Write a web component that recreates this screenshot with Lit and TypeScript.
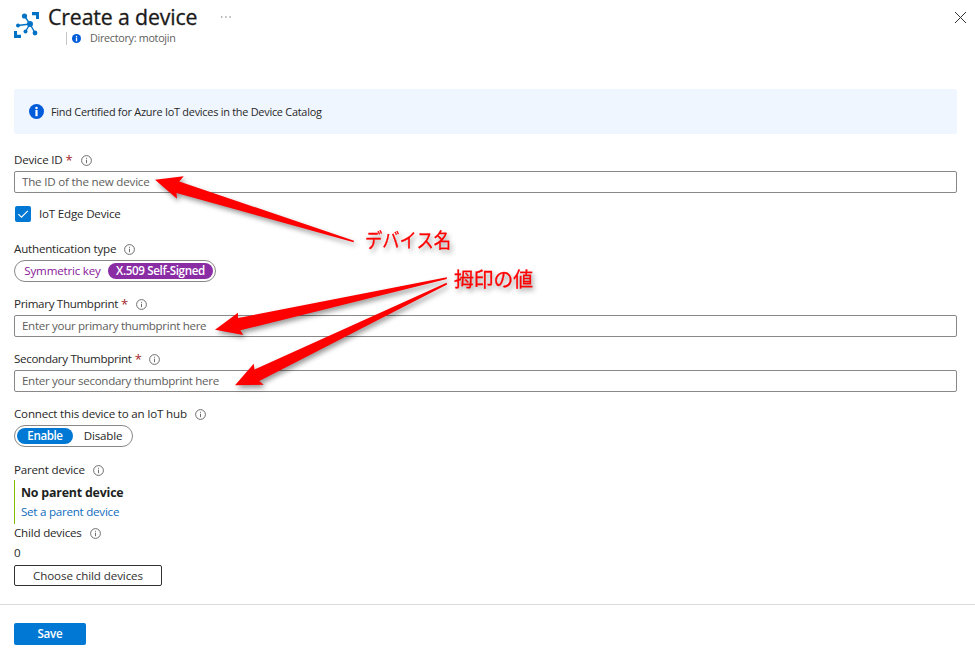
import { LitElement, html, css, svg } from "lit";
import { customElement, property } from "lit/decorators.js";


interface Arrow {
  points: string;
}


// Small outlined "i" shown after the field labels
@customElement("info-hint")
export class InfoHintElement extends LitElement {
  static styles = css`
    :host {
      display: block;
      width: 11px;
      height: 11px;
    }
    svg {
      display: block;
    }
  `;

  render() {
    return html`
      <svg width="11" height="11" viewBox="0 0 11 11">
        <circle cx="5.5" cy="5.5" r="4.9" fill="none" stroke="#605e5c" stroke-width="0.9" />
        <path d="M5.5 4.7V8.2M5.5 2.8V3.8" stroke="#605e5c" stroke-width="0.9" />
      </svg>
    `;
  }
}


// Filled blue "i" used by the header and the banner
@customElement("info-badge")
export class InfoBadgeElement extends LitElement {
  static styles = css`
    :host {
      display: block;
    }
    svg {
      display: block;
      width: 100%;
      height: 100%;
    }
  `;

  render() {
    return html`
      <svg viewBox="0 0 15 15">
        <circle cx="7.5" cy="7.5" r="7.5" fill="#015cda" />
        <circle cx="7.5" cy="4" r="1.25" fill="#fff" />
        <rect x="6.4" y="6" width="2.2" height="6.2" fill="#fff" />
      </svg>
    `;
  }
}


@customElement("field-label")
export class FieldLabelElement extends LitElement {
  static styles = css`
    :host {
      display: flex;
      align-items: center;
      height: 16px;
      white-space: nowrap;
    }
    .required {
      color: #a4262c;
      margin-left: 3px;
      font-size: 13px;
    }
    info-hint {
      margin-left: 8px;
    }
  `;

  @property({ type: String })
  text = "";

  @property({ type: Boolean })
  required = false;

  render() {
    return html`
      <span>${this.text}</span>
      ${this.required ? html`<span class="required">*</span>` : ""}
      <info-hint></info-hint>
    `;
  }
}


@customElement("app-root")
export class AppRootElement extends LitElement {
  static styles = [
    css`
      :host {
        display: block;
        position: relative;
        width: 975px;
        height: 656px;
        overflow: hidden;
        background: #fff;
        color: #292827;
        font-family: "Open Sans", "Noto Sans", sans-serif;
        font-size: 11.6px;
        letter-spacing: -0.2px;
        line-height: 16px;
      }
      * {
        box-sizing: border-box;
      }
      header {
        display: flex;
        height: 89px;
        padding: 0 9px 0 14px;
      }
      .logo {
        margin-top: 12px;
        width: 26px;
        height: 26px;
      }
      .heading {
        flex: 1;
        margin-left: 8px;
      }
      .title-row {
        display: flex;
        align-items: center;
        height: 32px;
        padding-top: 1px;
      }
      h1 {
        margin: 0;
        font-size: 21.3px;
        font-weight: 400;
        letter-spacing: -0.15px;
        line-height: 32px;
        color: #1b1a19;
        -webkit-text-stroke: 0.3px #1b1a19;
      }
      .more {
        margin-left: 23px;
      }
      .directory {
        display: flex;
        align-items: center;
        height: 13px;
        margin-left: 18px;
        padding-left: 5px;
        border-left: 1px solid #c8c6c4;
        color: #605e5c;
        font-size: 10.8px;
        letter-spacing: -0.3px;
        line-height: 12px;
      }
      .directory span {
        margin-top: -1px;
      }
      .directory info-badge {
        width: 9px;
        height: 9px;
        margin-right: 9px;
      }
      .close {
        margin-top: 12px;
        width: 11px;
        height: 11px;
      }
      main {
        padding: 0 18px 0 14px;
        height: 515px;
      }
      .banner {
        display: flex;
        align-items: center;
        height: 45px;
        padding-left: 15px;
        border-radius: 2px;
        background: #eff6ff;
        font-size: 10.9px;
        letter-spacing: -0.25px;
      }
      .banner info-badge {
        width: 15px;
        height: 15px;
        margin-right: 7px;
      }
      .field {
        padding-top: 18px;
      }
      .auth-type {
        padding-top: 19px;
      }
      .primary,
      .secondary {
        padding-top: 14px;
        letter-spacing: -0.32px;
      }
      .connect {
        padding-top: 14px;
      }
      .parent {
        padding-top: 15px;
      }
      input {
        display: block;
        width: 100%;
        height: 22px;
        margin-top: 3px;
        padding: 0 7px 2px;
        border: 1px solid #8a8886;
        border-radius: 2px;
        font: inherit;
        letter-spacing: inherit;
        color: #323130;
      }
      input::placeholder {
        color: #605e5c;
        opacity: 1;
      }
      .checkbox {
        display: flex;
        align-items: center;
        gap: 8px;
        height: 16px;
        margin-top: 13px;
        padding-left: 1px;
      }
      .checkbox svg {
        display: block;
      }
      .options {
        display: inline-flex;
        align-items: center;
        height: 22px;
        margin-top: 3px;
        padding: 0 2px;
        border: 1px solid #8a8886;
        border-radius: 11px;
        vertical-align: top;
      }
      .option {
        display: flex;
        align-items: center;
        justify-content: center;
        height: 16px;
        border-radius: 8px;
        white-space: nowrap;
      }
      .auth {
        width: 202px;
        color: #881798;
      }
      .auth .option {
        width: 91px;
      }
      .auth .selected {
        width: 105px;
        background: #8a2da5;
        color: #fff;
        font-weight: 600;
        letter-spacing: -0.35px;
      }
      .hub {
        width: 119px;
      }
      .hub .option {
        flex: none;
        width: 60px;
      }
      .hub .selected {
        width: 56px;
        background: #0078d4;
        color: #fff;
        font-weight: 600;
        letter-spacing: -0.4px;
      }
      .parent-card {
        height: 44px;
        margin-top: 2px;
        padding: 3px 0 0 6px;
        border-left: 1px solid #7fba00;
      }
      .parent-name {
        height: 19px;
        line-height: 19px;
        font-size: 12.4px;
        font-weight: 700;
        color: #201f1e;
      }
      .parent-link {
        line-height: 20px;
        letter-spacing: -0.25px;
        color: #0f6cbd;
      }
      .children {
        padding-top: 1px;
      }
      .child-count {
        margin: 4px 0 4px;
      }
      button {
        display: block;
        padding: 0;
        border-radius: 2px;
        font: inherit;
        letter-spacing: inherit;
      }
      .choose {
        width: 148px;
        height: 21px;
        border: 1px solid #323130;
        background: #fff;
        color: #323130;
        letter-spacing: -0.1px;
      }
      footer {
        height: 52px;
        padding: 18px 14px 0;
        border-top: 1px solid #d9d9d9;
      }
      .save {
        width: 72px;
        height: 22px;
        border: none;
        background: #0078d4;
        color: #fff;
        font-weight: 600;
      }
      .annotations {
        position: absolute;
        left: 0;
        top: 0;
        pointer-events: none;
        letter-spacing: 0;
        filter: drop-shadow(2px 3px 2.5px rgba(0, 0, 0, 0.4));
      }
      .annotations text {
        font-family: "Noto Sans CJK JP", sans-serif;
        font-size: 20px;
        fill: #f00;
        stroke: #f00;
        stroke-width: 0.3px;
      }
    `,
  ];

  // Hand-drawn style arrows, tip first
  private arrows: Arrow[] = [
    { points: "155,179.7 183.7,176.3 179.3,181.5 354,240.8 353.6,242.2 176.5,193 177,198.7" },
    { points: "215,329.7 238,312.7 238,318 446.8,277.3 446.8,279 240.3,330.3 243.3,335" },
    { points: "235,385.3 253.7,363.7 254.5,369.5 446.6,282.8 447.1,284.4 259.3,381 263.7,384.8" },
  ];

  private renderLogo() {
    return html`
      <svg class="logo" viewBox="0 0 26 26">
        <path d="M18 0H25V7H22V3.2H18ZM0 19H3V22.8H7V26H0Z" fill="#0072c6" />
        <path
          d="M10.5 4L16 12L21 21M16 12L4 13.5M16 12L11.5 19.5"
          fill="none"
          stroke="#0072c6"
          stroke-width="1.4"
        />
        <g fill="#0072c6">
          <circle cx="10.5" cy="4" r="2.6" />
          <circle cx="16" cy="12" r="3" />
          <circle cx="4" cy="13.5" r="2" />
          <circle cx="11.5" cy="19.5" r="2" />
          <circle cx="21" cy="21" r="2.4" />
        </g>
      </svg>
    `;
  }

  private renderAnnotations() {
    return html`
      <svg class="annotations" width="975" height="656">
        ${this.arrows.map(
          (arrow) => svg`<polygon points="${arrow.points}" fill="#f00" />`
        )}
        <text x="365" y="248" textLength="86" lengthAdjust="spacingAndGlyphs">デバイス名</text>
        <text x="454" y="287" textLength="79" lengthAdjust="spacingAndGlyphs">拇印の値</text>
      </svg>
    `;
  }

  render() {
    return html`
      <header>
        ${this.renderLogo()}
        <div class="heading">
          <div class="title-row">
            <h1>Create a device</h1>
            <svg class="more" width="12" height="4" viewBox="0 0 12 4">
              <path d="M1 2H2.3M5.2 2H6.5M9.4 2H10.7" stroke="#605e5c" stroke-width="1.2" />
            </svg>
          </div>
          <div class="directory">
            <info-badge></info-badge>
            <span>Directory: motojin</span>
          </div>
        </div>
        <svg class="close" viewBox="0 0 11 11">
          <path d="M0 0L11 11M11 0L0 11" stroke="#323130" stroke-width="1" />
        </svg>
      </header>
      <main>
        <div class="banner">
          <info-badge></info-badge>
          <span>Find Certified for Azure IoT devices in the Device Catalog</span>
        </div>
        <div class="field">
          <field-label text="Device ID" required></field-label>
          <input type="text" placeholder="The ID of the new device" />
        </div>
        <div class="checkbox">
          <svg width="16" height="16" viewBox="0 0 16 16">
            <rect width="16" height="16" rx="2" fill="#0078d4" />
            <path d="M3.3 8.2L6.5 11.2L12.8 4.9" fill="none" stroke="#fff" stroke-width="1.1" />
          </svg>
          <span>IoT Edge Device</span>
        </div>
        <div class="field auth-type">
          <field-label text="Authentication type"></field-label>
          <div class="options auth">
            <span class="option">Symmetric key</span>
            <span class="option selected">X.509 Self-Signed</span>
          </div>
        </div>
        <div class="field primary">
          <field-label text="Primary Thumbprint" required></field-label>
          <input type="text" placeholder="Enter your primary thumbprint here" />
        </div>
        <div class="field secondary">
          <field-label text="Secondary Thumbprint" required></field-label>
          <input type="text" placeholder="Enter your secondary thumbprint here" />
        </div>
        <div class="field connect">
          <field-label text="Connect this device to an IoT hub"></field-label>
          <div class="options hub">
            <span class="option selected">Enable</span>
            <span class="option">Disable</span>
          </div>
        </div>
        <div class="field parent">
          <field-label text="Parent device"></field-label>
          <div class="parent-card">
            <div class="parent-name">No parent device</div>
            <div class="parent-link">Set a parent device</div>
          </div>
        </div>
        <div class="children">
          <field-label text="Child devices"></field-label>
          <div class="child-count">0</div>
          <button class="choose">Choose child devices</button>
        </div>
      </main>
      <footer>
        <button class="save">Save</button>
      </footer>
      ${this.renderAnnotations()}
    `;
  }
}
